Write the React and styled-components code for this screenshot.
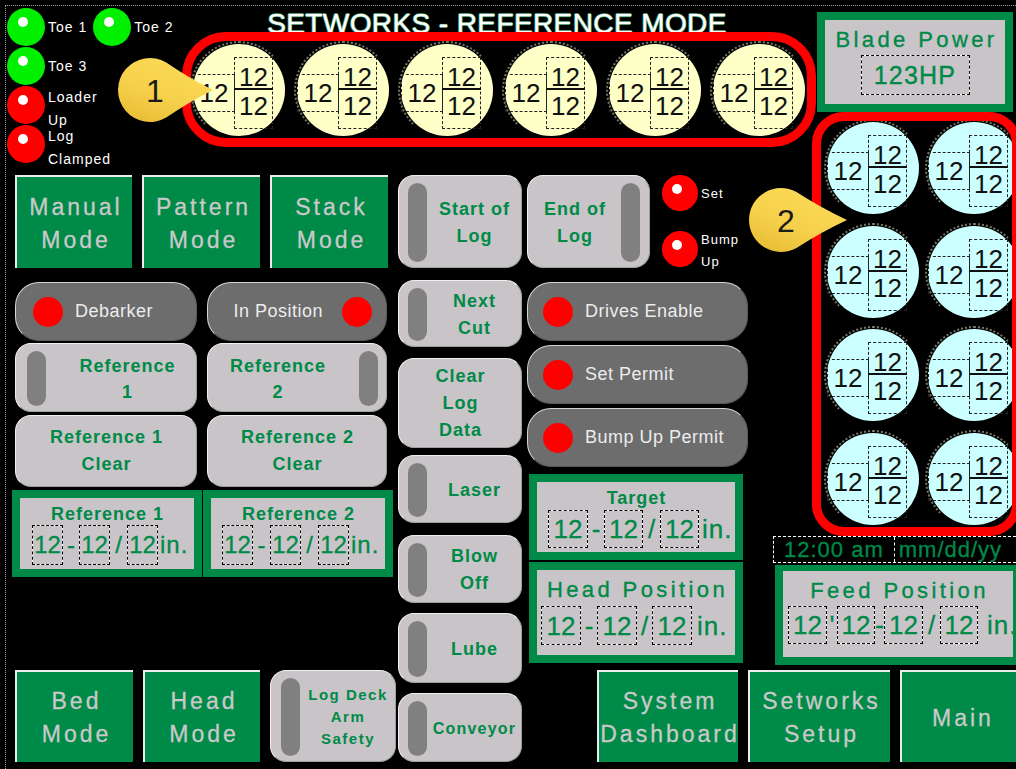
import React from "react";
import styled, { createGlobalStyle } from "styled-components";

const GREEN = "#008a48";
const GRAY = "#c8c4c8";
const FONT = `"Liberation Sans", Arial, Helvetica, sans-serif`;

const GlobalStyle = createGlobalStyle`
  html, body { margin: 0; padding: 0; background: #000; }
  body { font-family: ${FONT}; overflow: hidden; }
  *, *::before, *::after { box-sizing: border-box; }
`;

const Screen = styled.div`
  position: relative;
  width: 1016px;
  height: 769px;
  overflow: hidden;
  background: #000;
  font-family: ${FONT};
  display: grid;
  grid-template-columns: 182px 214px 129px 245px 42px 209px;
  grid-template-rows: 112px 58px 366px 129px 104px;
  &::before {
    content: "";
    position: absolute;
    left: 5px;
    top: 5px;
    right: -20px;
    bottom: -20px;
    border-top: 1px dotted #a0a0a0;
    border-left: 1px dotted #a0a0a0;
    pointer-events: none;
  }
`;

/* ---------- status lamps (top left) ---------- */
const StatusPanel = styled.div`
  grid-column: 1;
  grid-row: 1 / 3;
  padding: 8px 0 0 7px;
  display: flex;
  flex-direction: column;
`;
const StatusRow = styled.div`
  display: flex;
  height: 39px;
  gap: 6px;
`;
const StatusItem = styled.div`
  display: flex;
  gap: 3px;
`;
const Lamp = styled.div`
  position: relative;
  flex: none;
  width: ${(p) => p.$size}px;
  height: ${(p) => p.$size}px;
  border-radius: 50%;
  background: ${(p) => p.$color};
  &::after {
    content: "";
    position: absolute;
    width: 10px;
    height: 10px;
    border-radius: 50%;
    background: #fff;
    left: ${(p) => Math.round(p.$size * 0.29)}px;
    top: ${(p) => Math.round(p.$size * 0.24)}px;
  }
`;
const LampLabel = styled.div`
  color: #fff;
  font-size: ${(p) => p.$fs || 14}px;
  line-height: ${(p) => p.$lh || 23}px;
  letter-spacing: 1px;
  white-space: nowrap;
  align-self: ${(p) => (p.$multi ? "flex-start" : "center")};
  margin-top: ${(p) => p.$mt || 0}px;
`;

/* ---------- title + toe frame ---------- */
const TopCenter = styled.div`
  grid-column: 2 / 6;
  grid-row: 1 / 3;
  display: flex;
  flex-direction: column;
  min-width: 0;
`;
const ScreenTitle = styled.h1`
  margin: 0;
  height: 32px;
  overflow: hidden;
  padding-top: 10px;
  font-size: 28px;
  line-height: 28px;
  font-weight: 400;
  letter-spacing: 0.4px;
  color: #fff;
  text-align: center;
  white-space: nowrap;
  -webkit-text-stroke: 0.4px #fff;
  text-shadow: -1px 0 0 #0b6e3a, 1px 0 0 #0b6e3a, 0 1px 0 #0b6e3a, 0 -1px 0 #0b6e3a;
`;
const ToeFrame = styled.div`
  flex: none;
  width: 634px;
  height: 115px;
  border: 9px solid #ff0000;
  border-radius: 44px;
  display: flex;
  align-items: center;
  gap: 12px;
  padding-left: 2px;
`;

/* ---------- dials ---------- */
const Dial = styled.div`
  position: relative;
  flex: none;
  width: 92px;
  height: 92px;
  border-radius: 50%;
  background: ${(p) => p.$bg};
  display: flex;
  align-items: center;
  padding-top: 6px;
  &::before {
    content: "";
    position: absolute;
    inset: -3px;
    border-radius: 50%;
    border: 2px dotted #77776a;
    border-right-color: transparent;
    border-bottom-color: transparent;
    pointer-events: none;
  }
`;
const WholeBox = styled.div`
  flex: none;
  border: 1px dashed #222;
  width: 42px;
  height: 38px;
  display: flex;
  align-items: center;
  justify-content: center;
  font-size: 26px;
  line-height: 1;
  color: #111;
`;
const FracBox = styled.div`
  flex: none;
  border: 1px dashed #222;
  width: 39px;
  height: 72px;
  margin-left: -1px;
  display: flex;
  flex-direction: column;
  padding-top: 8px;
  font-size: 26px;
  color: #111;
  text-align: center;
`;
const FracNum = styled.div`
  line-height: 22px;
`;
const FracBar = styled.div`
  height: 2px;
  background: #111;
  margin: 0 -1px;
`;
const FracDen = styled.div`
  line-height: 22px;
  margin-top: 5px;
`;

function FractionDial({ bg }) {
  return (
    <Dial $bg={bg}>
      <WholeBox>12</WholeBox>
      <FracBox>
        <FracNum>12</FracNum>
        <FracBar />
        <FracDen>12</FracDen>
      </FracBox>
    </Dial>
  );
}

/* ---------- blade power ---------- */
const BladePower = styled.div`
  grid-column: 6;
  grid-row: 1;
  margin: 12px 8px 0 5px;
  height: 100px;
  border: 8px solid ${GREEN};
  background: ${GRAY};
  display: flex;
  flex-direction: column;
  align-items: center;
  padding-top: 8px;
  color: ${GREEN};
  -webkit-text-stroke: 0.35px ${GREEN};
`;
const BladeTitle = styled.div`
  font-size: 22px;
  line-height: 24px;
  letter-spacing: 3.4px;
  padding-left: 3px;
  white-space: nowrap;
`;
const dashedOnGray = `
  border: 1px dashed #000;
  background: linear-gradient(${GRAY}, ${GRAY}) padding-box, linear-gradient(#fff, #fff) border-box;
`;
const HpBox = styled.div`
  ${dashedOnGray}
  margin-top: 3px;
  width: 109px;
  height: 40px;
  display: flex;
  align-items: center;
  justify-content: center;
  font-size: 25px;
  letter-spacing: 1.2px;
  line-height: 1;
`;

/* ---------- side dial frame ---------- */
const DialFrame = styled.div`
  grid-column: 6;
  grid-row: 2 / 4;
  border: 9px solid #ff0000;
  border-radius: 32px;
  overflow: hidden;
  display: grid;
  grid-template-columns: 92px 92px;
  column-gap: 9px;
  row-gap: 11.5px;
  align-content: start;
  padding: 1px 0 0 6px;
`;

/* ---------- columns ---------- */
const LeftBody = styled.div`
  grid-column: 1 / 3;
  grid-row: 3 / 6;
  display: flex;
  flex-direction: column;
  padding: 5px 0 7px 15px;
`;
const MidBody = styled.div`
  grid-column: 3;
  grid-row: 3 / 6;
  display: flex;
  flex-direction: column;
  padding: 5px 0 0 2px;
`;
const RightMid = styled.div`
  grid-column: 4;
  grid-row: 3 / 5;
  display: flex;
  flex-direction: column;
  padding-top: 5px;
`;
const RightLower = styled.div`
  grid-column: 5 / 7;
  grid-row: 4;
  display: flex;
  flex-direction: column;
`;
const BottomRight = styled.div`
  grid-column: 4 / 7;
  grid-row: 5;
  display: flex;
  gap: 10px;
  padding: 5px 0 0 72px;
`;
const Row = styled.div`
  display: flex;
  flex: none;
  gap: ${(p) => (p.$gap ?? 10)}px;
  margin-top: ${(p) => (p.$push ? "auto" : `${p.$mt || 0}px`)};
  margin-left: ${(p) => p.$ml || 0}px;
`;
const Stack = styled.div`
  display: flex;
  flex: none;
  flex-direction: column;
  margin-left: ${(p) => p.$ml || 0}px;
  ${(p) => (p.$h ? `height: ${p.$h}px;` : "")}
`;

/* ---------- green nav buttons ---------- */
const ModeButton = styled.div`
  flex: none;
  width: ${(p) => p.$w}px;
  height: ${(p) => p.$h || 93}px;
  background: ${GREEN};
  border-top: 2px solid #ececec;
  border-left: 2px solid #ececec;
  display: flex;
  align-items: center;
  justify-content: center;
  text-align: center;
  color: #c9c9c9;
  font-size: 23px;
  line-height: 33px;
  letter-spacing: 3px;
  padding: 2px 0 0 3px;
  white-space: nowrap;
  -webkit-text-stroke: 0.3px #c9c9c9;
`;

/* ---------- gray push buttons ---------- */
const PanelButton = styled.div`
  flex: none;
  width: ${(p) => p.$w}px;
  height: ${(p) => p.$h}px;
  margin-top: ${(p) => p.$mt || 0}px;
  border-radius: 16px;
  background: ${GRAY};
  border: 1px solid;
  border-color: #f0f0f0 #a0a0a0 #a0a0a0 #f0f0f0;
  display: flex;
  flex-direction: ${(p) => (p.$bar === "right" ? "row-reverse" : "row")};
  align-items: stretch;
  padding: ${(p) =>
    p.$bar === "right"
      ? `7px ${p.$inset}px 5px 0`
      : p.$bar === "left"
      ? `7px 0 5px ${p.$inset}px`
      : "0"};
`;
const Led = styled.div`
  flex: none;
  width: 19px;
  border-radius: 10px;
  background: #808080;
`;
const ButtonLabel = styled.div`
  flex: 1;
  display: flex;
  align-items: center;
  justify-content: center;
  text-align: center;
  color: ${GREEN};
  font-weight: 700;
  font-size: ${(p) => p.$fs || 18}px;
  line-height: ${(p) => p.$lh || 27}px;
  letter-spacing: ${(p) => p.$ls ?? 1}px;
  padding-left: 1px;
  margin-left: ${(p) => p.$gl || 0}px;
  margin-right: ${(p) => p.$gr || 0}px;
  white-space: nowrap;
`;

function PushButton({ w, h, mt, bar, inset = 9, gl, gr, fs, lh, ls, children }) {
  return (
    <PanelButton $w={w} $h={h} $mt={mt} $bar={bar} $inset={inset}>
      {bar && <Led />}
      <ButtonLabel $gl={gl} $gr={gr} $fs={fs} $lh={lh} $ls={ls}>
        <span>{children}</span>
      </ButtonLabel>
    </PanelButton>
  );
}

/* ---------- dark pill indicators ---------- */
const Pill = styled.div`
  flex: none;
  width: ${(p) => p.$w}px;
  height: 59px;
  margin-top: ${(p) => p.$mt || 0}px;
  border-radius: 24px;
  background: #6d6d6d;
  border: 1px solid;
  border-color: #d4d4d4 #5a5a5a #5a5a5a #d4d4d4;
  display: flex;
  align-items: center;
  flex-direction: ${(p) => (p.$reverse ? "row-reverse" : "row")};
  gap: ${(p) => p.$gap}px;
  padding: 0 ${(p) => p.$pad}px;
  color: #ececec;
  font-size: 18px;
  letter-spacing: 0.5px;
  white-space: nowrap;
`;
const PillLamp = styled.div`
  flex: none;
  width: 30px;
  height: 30px;
  border-radius: 50%;
  background: #ff0000;
`;

/* ---------- readouts ---------- */
const Readout = styled.div`
  flex: none;
  width: ${(p) => p.$w}px;
  height: ${(p) => p.$h}px;
  margin-top: ${(p) => p.$mt || 0}px;
  margin-left: ${(p) => p.$ml || 0}px;
  border: 8px solid ${GREEN};
  border-top-width: ${(p) => p.$bt || 8}px;
  background: ${GRAY};
  display: flex;
  flex-direction: column;
  align-items: center;
  padding-top: ${(p) => p.$pt}px;
  color: ${GREEN};
`;
const ReadoutTitle = styled.div`
  font-size: ${(p) => (p.$big ? 22 : 18)}px;
  font-weight: ${(p) => (p.$big ? 400 : 700)};
  line-height: ${(p) => (p.$big ? 24 : 22)}px;
  letter-spacing: ${(p) => (p.$big ? 3.4 : 1)}px;
  padding-left: ${(p) => (p.$big ? 3 : 1)}px;
  white-space: nowrap;
  -webkit-text-stroke: ${(p) => (p.$big ? `0.35px ${GREEN}` : "0")};
`;
const ValueRow = styled.div`
  align-self: stretch;
  display: flex;
  align-items: center;
  padding-left: ${(p) => p.$pl}px;
  margin-top: ${(p) => p.$mt || 0}px;
  font-size: ${(p) => p.$fs}px;
  line-height: 1;
  white-space: nowrap;
  -webkit-text-stroke: 0.3px ${GREEN};
`;
const ValueBox = styled.div`
  ${dashedOnGray}
  flex: none;
  width: ${(p) => p.$w}px;
  height: ${(p) => p.$h}px;
  display: flex;
  align-items: center;
  justify-content: center;
`;
const Sep = styled.span`
  flex: none;
  width: ${(p) => p.$w}px;
  text-align: center;
`;
const Unit = styled.span`
  margin-left: ${(p) => p.$ml}px;
  letter-spacing: 1px;
`;

function Values({ pl, mt, fs, h, parts }) {
  return (
    <ValueRow $pl={pl} $mt={mt} $fs={fs}>
      {parts.map((p, i) => {
        if (p[0] === "box")
          return (
            <ValueBox key={i} $w={p[1]} $h={h}>
              12
            </ValueBox>
          );
        if (p[0] === "sep")
          return (
            <Sep key={i} $w={p[2]}>
              {p[1]}
            </Sep>
          );
        return (
          <Unit key={i} $ml={p[1]}>
            in.
          </Unit>
        );
      })}
    </ValueRow>
  );
}

/* ---------- clock ---------- */
const Clock = styled.div`
  flex: none;
  display: flex;
  align-items: stretch;
  height: 27px;
  margin-left: 3px;
  border: 1px dashed #fff;
  border-right: none;
  color: ${GREEN};
  font-size: 22px;
  letter-spacing: 1px;
  -webkit-text-stroke: 0.3px ${GREEN};
`;
const ClockPart = styled.div`
  display: flex;
  align-items: center;
  padding: 0 ${(p) => p.$px}px;
  white-space: nowrap;
  line-height: 1;
`;
const ClockDivider = styled.div`
  width: 0;
  border-left: 1px dashed #fff;
`;

/* ---------- callout pins ---------- */
const PinSvg = styled.svg`
  position: absolute;
  left: ${(p) => p.$x}px;
  top: ${(p) => p.$y}px;
  overflow: visible;
  z-index: 3;
  pointer-events: none;
`;

function Callout({ cx, cy, r = 32, tip, label }) {
  const d = tip - cx;
  const lc = r + 2;
  const th = Math.acos(r / d);
  const tx = lc + r * Math.cos(th);
  const ty = r * Math.sin(th);
  const tipX = lc + d;
  const mx = (tx + tipX) / 2;
  const path = `M ${tx} ${lc - ty} A ${r} ${r} 0 1 0 ${tx} ${lc + ty} Q ${mx} ${lc + ty * 0.42} ${tipX} ${lc} Q ${mx} ${lc - ty * 0.42} ${tx} ${lc - ty} Z`;
  const id = `pinGrad${label}`;
  return (
    <PinSvg $x={cx - lc} $y={cy - lc} width={tipX + 2} height={2 * lc}>
      <defs>
        <linearGradient id={id} x1="0.8" y1="0" x2="0.2" y2="1">
          <stop offset="0" stopColor="#fcdc58" />
          <stop offset="0.6" stopColor="#f6d04a" />
          <stop offset="1" stopColor="#e8bd35" />
        </linearGradient>
      </defs>
      <path d={path} fill={`url(#${id})`} />
      <text
        x={lc + 5}
        y={lc + 11.5}
        textAnchor="middle"
        fontSize="32"
        fontFamily={FONT}
        fill="#1a1a1a"
      >
        {label}
      </text>
    </PinSvg>
  );
}

const CREAM = "#ffffc8";
const CYAN = "#ccffff";

export default function App() {
  return (
    <>
      <GlobalStyle />
      <Screen>
        <StatusPanel>
          <StatusRow>
            <StatusItem>
              <Lamp $size={38} $color="#00f000" />
              <LampLabel>Toe 1</LampLabel>
            </StatusItem>
            <StatusItem>
              <Lamp $size={38} $color="#00f000" />
              <LampLabel>Toe 2</LampLabel>
            </StatusItem>
          </StatusRow>
          <StatusRow>
            <StatusItem>
              <Lamp $size={38} $color="#00f000" />
              <LampLabel>Toe 3</LampLabel>
            </StatusItem>
          </StatusRow>
          <StatusRow>
            <StatusItem>
              <Lamp $size={38} $color="#ff0000" />
              <LampLabel $multi>
                Loader
                <br />
                Up
              </LampLabel>
            </StatusItem>
          </StatusRow>
          <StatusRow>
            <StatusItem>
              <Lamp $size={38} $color="#ff0000" />
              <LampLabel $multi>
                Log
                <br />
                Clamped
              </LampLabel>
            </StatusItem>
          </StatusRow>
        </StatusPanel>

        <TopCenter>
          <ScreenTitle>SETWORKS - REFERENCE MODE</ScreenTitle>
          <ToeFrame>
            {[0, 1, 2, 3, 4, 5].map((i) => (
              <FractionDial key={i} bg={CREAM} />
            ))}
          </ToeFrame>
        </TopCenter>

        <BladePower>
          <BladeTitle>Blade Power</BladeTitle>
          <HpBox>123HP</HpBox>
        </BladePower>

        <DialFrame>
          {[0, 1, 2, 3, 4, 5, 6, 7].map((i) => (
            <FractionDial key={i} bg={CYAN} />
          ))}
        </DialFrame>

        <LeftBody>
          <Row>
            <ModeButton $w={117}>
              <span>
                Manual
                <br />
                Mode
              </span>
            </ModeButton>
            <ModeButton $w={118}>
              <span>
                Pattern
                <br />
                Mode
              </span>
            </ModeButton>
            <ModeButton $w={118}>
              <span>
                Stack
                <br />
                Mode
              </span>
            </ModeButton>
          </Row>
          <Row $mt={14}>
            <Pill $w={182} $pad={17} $gap={12}>
              <PillLamp />
              <span>Debarker</span>
            </Pill>
            <Pill $w={180} $pad={14} $gap={19} $reverse>
              <PillLamp />
              <span>In Position</span>
            </Pill>
          </Row>
          <Row $mt={2}>
            <PushButton w={182} h={69} bar="left" inset={11} gl={12} lh={26}>
              Reference
              <br />1
            </PushButton>
            <PushButton w={180} h={69} bar="right" inset={8} gr={12} lh={26}>
              Reference
              <br />2
            </PushButton>
          </Row>
          <Row $mt={3}>
            <PushButton w={182} h={72}>
              Reference 1
              <br />
              Clear
            </PushButton>
            <PushButton w={180} h={72}>
              Reference 2
              <br />
              Clear
            </PushButton>
          </Row>
          <Row $mt={3} $ml={-3} $gap={1}>
            <Readout $w={190} $h={87} $pt={5}>
              <ReadoutTitle>Reference 1</ReadoutTitle>
              <Values
                pl={12}
                fs={24}
                h={40}
                parts={[["box", 31], ["sep", "-", 16], ["box", 31], ["sep", "/", 17], ["box", 31], ["unit", 2]]}
              />
            </Readout>
            <Readout $w={190} $h={87} $pt={5}>
              <ReadoutTitle>Reference 2</ReadoutTitle>
              <Values
                pl={11}
                fs={24}
                h={40}
                parts={[["box", 31], ["sep", "-", 17], ["box", 31], ["sep", "/", 17], ["box", 31], ["unit", 2]]}
              />
            </Readout>
          </Row>
          <Row $push>
            <ModeButton $w={118} $h={92}>
              <span>
                Bed
                <br />
                Mode
              </span>
            </ModeButton>
            <ModeButton $w={117} $h={92}>
              <span>
                Head
                <br />
                Mode
              </span>
            </ModeButton>
            <PushButton w={126} h={92} bar="left" inset={10} fs={15} lh={22} ls={1.5}>
              Log Deck
              <br />
              Arm
              <br />
              Safety
            </PushButton>
          </Row>
        </LeftBody>

        <MidBody>
          <PushButton w={124} h={93} bar="left">
            Start of
            <br />
            Log
          </PushButton>
          <PushButton w={124} h={67} mt={12} bar="left">
            Next
            <br />
            Cut
          </PushButton>
          <PushButton w={124} h={90} mt={11}>
            Clear
            <br />
            Log
            <br />
            Data
          </PushButton>
          <PushButton w={124} h={68} mt={7} bar="left">
            Laser
          </PushButton>
          <PushButton w={124} h={68} mt={12} bar="left">
            Blow
            <br />
            Off
          </PushButton>
          <PushButton w={124} h={70} mt={10} bar="left">
            Lube
          </PushButton>
          <PushButton w={124} h={69} mt={10} bar="left" fs={16} ls={1.2}>
            Conveyor
          </PushButton>
        </MidBody>

        <RightMid>
          <Row $ml={2} $gap={12}>
            <PushButton w={123} h={93} bar="right">
              End of
              <br />
              Log
            </PushButton>
            <Stack $h={93}>
              <StatusItem>
                <Lamp $size={36} $color="#ff0000" />
                <LampLabel $fs={13}>Set</LampLabel>
              </StatusItem>
              <Row $mt={20} $gap={3}>
                <Lamp $size={36} $color="#ff0000" />
                <LampLabel $fs={13} $lh={22} $multi $mt={-2}>
                  Bump
                  <br />
                  Up
                </LampLabel>
              </Row>
            </Stack>
          </Row>
          <Stack $ml={2}>
            <Pill $w={221} $mt={14} $pad={15} $gap={12}>
              <PillLamp />
              <span>Drives Enable</span>
            </Pill>
            <Pill $w={221} $mt={4} $pad={15} $gap={12}>
              <PillLamp />
              <span>Set Permit</span>
            </Pill>
            <Pill $w={221} $mt={4} $pad={15} $gap={12}>
              <PillLamp />
              <span>Bump Up Permit</span>
            </Pill>
          </Stack>
          <Readout $w={214} $h={86} $mt={7} $ml={4} $pt={5}>
            <ReadoutTitle>Target</ReadoutTitle>
            <Values
              pl={11}
              mt={1}
              fs={26}
              h={38}
              parts={[["box", 40], ["sep", "-", 16], ["box", 39], ["sep", "/", 17], ["box", 39], ["unit", 3]]}
            />
          </Readout>
          <Readout $w={214} $h={101} $mt={2} $ml={4} $pt={8}>
            <ReadoutTitle $big>Head Position</ReadoutTitle>
            <Values
              pl={4}
              mt={4}
              fs={26}
              h={39}
              parts={[["box", 40], ["sep", "-", 16], ["box", 40], ["sep", "/", 15], ["box", 40], ["unit", 5]]}
            />
          </Readout>
        </RightMid>

        <RightLower>
          <Clock>
            <ClockPart $px={10}>12:00 am</ClockPart>
            <ClockDivider />
            <ClockPart $px={4}>mm/dd/yy</ClockPart>
          </Clock>
          <Readout $w={246} $h={100} $mt={2} $ml={5} $pt={8} $bt={6}>
            <ReadoutTitle $big>Feed Position</ReadoutTitle>
            <Values
              pl={5}
              mt={3}
              fs={26}
              h={38}
              parts={[
                ["box", 39],
                ["sep", "'", 10],
                ["box", 38],
                ["sep", "-", 9],
                ["box", 39],
                ["sep", "/", 17],
                ["box", 38],
                ["unit", 9],
              ]}
            />
          </Readout>
        </RightLower>

        <BottomRight>
          <ModeButton $w={141} $h={92}>
            <span>
              System
              <br />
              Dashboard
            </span>
          </ModeButton>
          <ModeButton $w={142} $h={92}>
            <span>
              Setworks
              <br />
              Setup
            </span>
          </ModeButton>
          <ModeButton $w={121} $h={92}>
            <span>Main</span>
          </ModeButton>
        </BottomRight>

        <Callout cx={150} cy={90} tip={213} label="1" />
        <Callout cx={781} cy={220} tip={847} label="2" />
      </Screen>
    </>
  );
}
